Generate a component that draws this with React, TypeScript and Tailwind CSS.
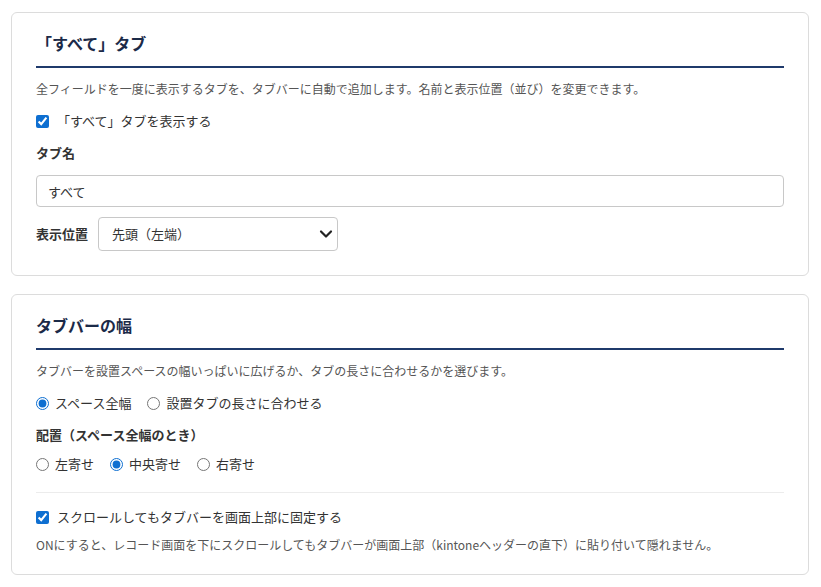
import React, { useState } from 'react';

const FONT = "font-['Noto_Sans_CJK_JP','Noto_Sans',sans-serif]";

function SectionCard({ title, children }: { title: string; children: React.ReactNode }) {
  return (
    <section className="rounded-[6px] border border-[#dcdcdc] bg-white px-6 pt-[18px]">
      <h2 className="border-b-2 border-[#1f3a6b] pb-[11px] text-[16px] font-bold leading-6 text-[#1b2a48]">
        {title}
      </h2>
      {children}
    </section>
  );
}

function Check({ checked, onChange, label, className }: { checked: boolean; onChange: (v: boolean) => void; label: string; className?: string }) {
  return (
    <label className={cn('flex h-5 items-center gap-2 text-[13px] text-[#333]', className)}>
      <input
        type="checkbox"
        checked={checked}
        onChange={(e) => onChange(e.target.checked)}
        className="m-0 h-[13px] w-[13px] accent-[#0e6fd1]"
      />
      <span>{label}</span>
    </label>
  );
}

function RadioGroup({ name, options, value, onChange, className }: { name: string; options: string[]; value: string; onChange: (v: string) => void; className?: string }) {
  return (
    <div className={cn('flex h-5 items-center gap-4', className)}>
      {options.map((opt) => (
        <label key={opt} className="flex items-center gap-[6px] text-[13px] text-[#333]">
          <input
            type="radio"
            name={name}
            checked={value === opt}
            onChange={() => onChange(opt)}
            className="m-0 h-[13px] w-[13px] accent-[#0e6fd1]"
          />
          <span>{opt}</span>
        </label>
      ))}
    </div>
  );
}

export default function App() {
  const [showAll, setShowAll] = useState(true);
  const [tabName, setTabName] = useState('すべて');
  const [position, setPosition] = useState('first');
  const [width, setWidth] = useState('スペース全幅');
  const [align, setAlign] = useState('中央寄せ');
  const [sticky, setSticky] = useState(true);

  return (
    <div className={cn('min-h-screen bg-white pt-3 pl-[11px] pr-3', FONT)}>
      <SectionCard title="「すべて」タブ">
        <p className="mt-3 text-[12px] leading-[18px] text-[#555]">
          全フィールドを一度に表示するタブを、タブバーに自動で追加します。名前と表示位置（並び）を変更できます。
        </p>
        <Check className="mt-[13px]" checked={showAll} onChange={setShowAll} label="「すべて」タブを表示する" />

        <div className="mt-3 text-[13px] font-bold leading-5 text-[#333]">タブ名</div>
        <input
          value={tabName}
          onChange={(e) => setTabName(e.target.value)}
          className="mt-3 block h-8 w-full rounded-[4px] border border-[#c8c8c8] px-[11px] text-[13px] text-[#333] outline-none"
        />

        <div className="mt-[10px] flex items-center gap-[10px] pb-6">
          <span className="text-[13px] font-bold text-[#333]">表示位置</span>
          <div className="relative w-[240px]">
            <select
              value={position}
              onChange={(e) => setPosition(e.target.value)}
              className="block h-[34px] w-full appearance-none rounded-[4px] border border-[#c8c8c8] bg-white pl-[13px] pr-8 text-[13px] text-[#333] outline-none"
            >
              <option value="first">先頭（左端）</option>
              <option value="last">末尾（右端）</option>
            </select>
            <svg
              className="pointer-events-none absolute right-[5px] top-[11px]"
              width="14"
              height="12"
              viewBox="0 0 14 12"
              fill="none"
            >
              <polyline points="2,3.5 7,8.5 12,3.5" stroke="#222" strokeWidth="2.2" strokeLinecap="round" strokeLinejoin="round" />
            </svg>
          </div>
        </div>
      </SectionCard>

      <div className="mt-[18px]">
        <SectionCard title="タブバーの幅">
          <p className="mt-3 text-[12px] leading-[18px] text-[#555]">
            タブバーを設置スペースの幅いっぱいに広げるか、タブの長さに合わせるかを選びます。
          </p>
          <RadioGroup
            className="mt-[13px]"
            name="width"
            options={['スペース全幅', '設置タブの長さに合わせる']}
            value={width}
            onChange={setWidth}
          />

          <div className="mt-3 text-[13px] font-bold leading-5 text-[#333]">配置（スペース全幅のとき）</div>
          <RadioGroup
            className="mt-[9px]"
            name="align"
            options={['左寄せ', '中央寄せ', '右寄せ']}
            value={align}
            onChange={setAlign}
          />

          <div className="mt-[18px] border-t border-[#ececec]" />

          <Check className="mt-[14px]" checked={sticky} onChange={setSticky} label="スクロールしてもタブバーを画面上部に固定する" />
          <p className="mt-[9px] pb-5 text-[12px] leading-[18px] text-[#555]">
            ONにすると、レコード画面を下にスクロールしてもタブバーが画面上部（kintoneヘッダーの直下）に貼り付いて隠れません。
          </p>
        </SectionCard>
      </div>
    </div>
  );
}

function cn(...classes: any[]) {
  return classes.filter(Boolean).join(' ');
}
